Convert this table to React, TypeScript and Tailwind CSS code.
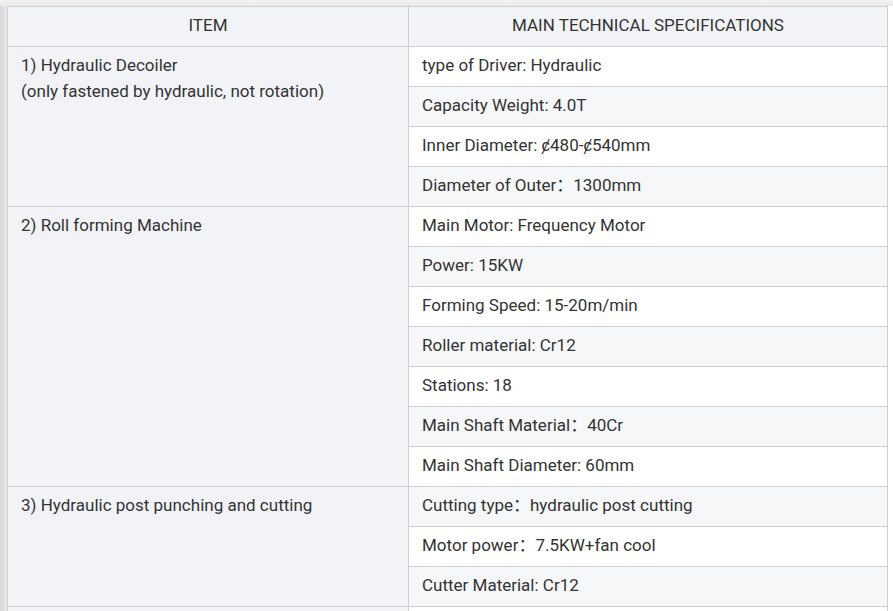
import React from "react";

type Group = { item: string[]; specs: string[] };

const groups: Group[] = [
  {
    item: ["1) Hydraulic Decoiler", "(only fastened by hydraulic, not rotation)"],
    specs: [
      "type of Driver: Hydraulic",
      "Capacity Weight: 4.0T",
      "Inner Diameter: ȼ480-ȼ540mm",
      "Diameter of Outer：1300mm",
    ],
  },
  {
    item: ["2) Roll forming Machine"],
    specs: [
      "Main Motor: Frequency Motor",
      "Power: 15KW",
      "Forming Speed: 15-20m/min",
      "Roller material: Cr12",
      "Stations: 18",
      "Main Shaft Material：40Cr",
      "Main Shaft Diameter: 60mm",
    ],
  },
  {
    item: ["3) Hydraulic post punching and cutting"],
    specs: [
      "Cutting type：hydraulic post cutting",
      "Motor power：7.5KW+fan cool",
      "Cutter Material: Cr12",
    ],
  },
  {
    // next group starts just below the visible edge
    item: [""],
    specs: [""],
  },
];

const App: React.FC = () => {
  let rowIndex = 0;

  return (
    <div
      className="w-[893px] h-[611px] overflow-hidden bg-white text-[#333] text-[17px]"
      style={{ fontFamily: "Roboto, 'Noto Sans CJK SC', 'Liberation Sans', sans-serif" }}
    >
      <div className="h-[6px] bg-gradient-to-b from-[#f3f3f3] to-[#e9e9e9]" />
      <div className="flex">
        {/* left shadow strip */}
        <div className="w-[7px] shrink-0 self-stretch bg-gradient-to-r from-[#d6d6d6] to-[#eaeaea]" />
        <table className="w-[881px] border-collapse border border-[#cfcfcf] table-fixed">
          <colgroup>
            <col className="w-[401px]" />
            <col />
          </colgroup>
          <thead>
            <tr className="bg-[#f2f3f7]">
              <th className="h-[40px] border border-[#cfcfcf] font-normal text-center leading-[26px] px-0 pt-0 pb-[3px]">
                ITEM
              </th>
              <th className="h-[40px] border border-[#cfcfcf] font-normal text-center leading-[26px] px-0 pt-0 pb-[3px]">
                MAIN TECHNICAL SPECIFICATIONS
              </th>
            </tr>
          </thead>
          <tbody>
            {groups.map((g, gi) =>
              g.specs.map((spec, i) => {
                rowIndex += 1;
                const striped = rowIndex % 2 === 0;
                return (
                  <tr key={`${gi}-${i}`} className={striped ? "bg-[#f6f7f9]" : "bg-white"}>
                    {i === 0 && (
                      <td
                        rowSpan={g.specs.length}
                        className="border border-[#cfcfcf] bg-[#f2f3f7] align-top px-[13px] pt-[5px] leading-[26px]"
                      >
                        {g.item.map((line, li) => (
                          <div key={li}>{line}</div>
                        ))}
                      </td>
                    )}
                    <td className="h-[40px] border border-[#cfcfcf] px-[13px] pt-0 pb-[3px] leading-[26px] align-middle">
                      {spec}
                    </td>
                  </tr>
                );
              })
            )}
          </tbody>
        </table>
      </div>
    </div>
  );
};

export default App;
